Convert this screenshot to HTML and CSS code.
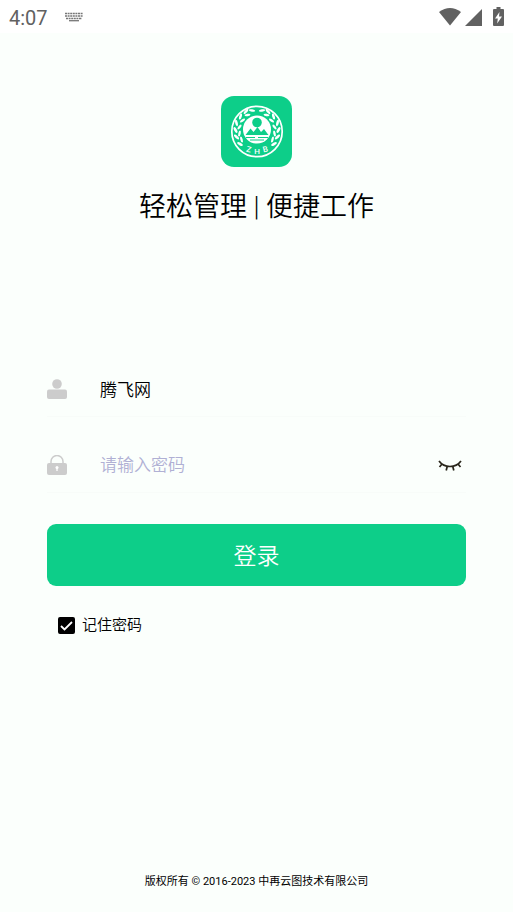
FILE: index.html
```html
<!DOCTYPE html>
<html lang="zh-CN">
<head>
    <meta charset="UTF-8">
    <meta name="viewport" content="width=device-width, initial-scale=1.0">
    <title>登录</title>
    <link rel="stylesheet" href="styles.css">
</head>
<body>
<header class="status-bar">
    <span class="time">4:07</span>
    <svg class="keyboard" width="18" height="10" viewBox="0 0 18 10" aria-hidden="true">
        <path d="M0 1.5h18M0 4h18M1 6.5h16" stroke="#777" stroke-width="1.7" stroke-dasharray="2 .6"/>
        <path d="M4 8.7h10" stroke="#777" stroke-width="1.3"/>
    </svg>
    <div class="status-icons">
        <svg width="22" height="18" viewBox="0 0 22 18" aria-hidden="true"><path d="M0 4Q11-4 22 4L11 17.5Z" fill="#616161"/></svg>
        <svg width="17" height="18" viewBox="0 0 17 18" aria-hidden="true"><path d="M17 1v17H0Z" fill="#616161"/></svg>
        <svg class="battery" width="11" height="19" viewBox="0 0 11 19" aria-hidden="true">
            <path d="M3.5 0h4v2H10q1 0 1 1v15q0 1-1 1H1q-1 0-1-1V3q0-1 1-1h2.5Z" fill="#616161"/>
            <path d="M6.5 5L2 11.5h2.8L4.2 16.5L9 9.5H6Z" fill="#fff"/>
        </svg>
    </div>
</header>

<main class="login">
    <svg class="logo" viewBox="0 0 71 71" role="img" aria-label="ZHB">
        <rect width="71" height="71" rx="13" fill="#0dce89"/>
        <circle cx="36" cy="35.5" r="25.2" fill="none" stroke="#fff" stroke-width="1.7"/>
        <circle cx="36" cy="33.5" r="14" fill="#fff"/>
        <circle cx="36" cy="26.5" r="4.8" fill="#0dce89"/>
        <path d="M24.5 39L29.500 32.5L32.500 36L36.500 31L40 36L43 33L47.5 39Z" fill="#0dce89"/>
        <path d="M25 41.5h9M37 41.5h10M29 44h14" stroke="#0dce89" stroke-width="1.1"/>
        <g id="branch" fill="#fff">
            <ellipse cx="31" cy="14.5" rx="3.2" ry="1.2" transform="rotate(10 31 14.5)"/>
            <ellipse cx="25" cy="15.5" rx="3.2" ry="1.3" transform="rotate(-50 25 15.5)"/>
            <ellipse cx="26.5" cy="19" rx="3" ry="1.2" transform="rotate(-10 26.5 19)"/>
            <ellipse cx="19.5" cy="20.5" rx="3.2" ry="1.3" transform="rotate(-75 19.5 20.5)"/>
            <ellipse cx="21.5" cy="24.5" rx="3" ry="1.2" transform="rotate(-35 21.5 24.5)"/>
            <ellipse cx="15.5" cy="27" rx="3.2" ry="1.3" transform="rotate(78 15.5 27)"/>
            <ellipse cx="18.5" cy="31" rx="3" ry="1.2" transform="rotate(-52 18.5 31)"/>
            <ellipse cx="14.5" cy="34" rx="3.2" ry="1.3" transform="rotate(60 14.5 34)"/>
            <ellipse cx="18.5" cy="37.5" rx="3" ry="1.2" transform="rotate(-78 18.5 37.5)"/>
            <ellipse cx="15.5" cy="41" rx="3.2" ry="1.3" transform="rotate(42 15.5 41)"/>
            <ellipse cx="20.5" cy="43.5" rx="3" ry="1.2" transform="rotate(75 20.5 43.5)"/>
            <ellipse cx="19" cy="48" rx="3.2" ry="1.3" transform="rotate(28 19 48)"/>
        </g>
        <use href="#branch" transform="matrix(-1 0 0 1 72 0)"/>
        <g class="logo-text">
            <text x="27" y="56" transform="rotate(14 27 56)">Z</text>
            <text x="36" y="58">H</text>
            <text x="45" y="56" transform="rotate(-14 45 56)">B</text>
        </g>
    </svg>
    <h1>轻松管理 | 便捷工作</h1>

    <form class="login-form">
        <div class="field">
            <label for="username" aria-label="用户名">
                <svg width="20" height="20" viewBox="0 0 20 20" aria-hidden="true">
                    <circle cx="10" cy="5" r="4.8" fill="#ccc"/>
                    <rect y="10.5" width="20" height="9.5" rx="2" fill="#ccc"/>
                </svg>
            </label>
            <input id="username" type="text" value="腾飞网">
        </div>
        <div class="field">
            <label for="password" aria-label="密码">
                <svg width="20" height="20" viewBox="0 0 20 20" aria-hidden="true">
                    <path d="M4 9V6.5a6 6 0 0 1 12 0V9" fill="none" stroke="#ccc" stroke-width="1.5"/>
                    <rect y="8" width="20" height="12" rx="2" fill="#ccc"/>
                    <circle cx="10" cy="12.5" r="1.5" fill="#fff"/>
                    <path d="M10 12v4" stroke="#fff" stroke-width="1.3"/>
                </svg>
            </label>
            <input id="password" type="password" placeholder="请输入密码">
            <button class="toggle" type="button" aria-label="显示密码">
                <svg width="24" height="14" viewBox="0 0 24 14" aria-hidden="true">
                    <path d="M1 3Q5 8.500 12 8.500T23 3M4 6L1.500 9M20 6L22.500 9M9.200 8.500L8.200 12.500M14.800 8.500L15.800 12.500" fill="none" stroke="#29251a" stroke-width="1.7"/>
                </svg>
            </button>
        </div>
        <button class="submit" type="submit">登录</button>
        <label class="remember">
            <input type="checkbox" checked>
            <span>记住密码</span>
        </label>
    </form>
</main>

<footer>版权所有 © 2016-2023 中再云图技术有限公司</footer>

<script>
    const password = document.getElementById("password");

    // 切换密码显示
    document.querySelector(".toggle").addEventListener("click", function() {
        password.type = password.type === "password" ? "text" : "password";
    });

    document.querySelector(".login-form").addEventListener("submit", function(e) {
        e.preventDefault();
    });
</script>
</body>
</html>
```

FILE: styles.css
```css
* { box-sizing: border-box; }
body { margin: 0; min-height: 100vh; display: flex; flex-direction: column; background: #fbfffc; color: #000; font-family: Roboto, "Noto Sans CJK SC", sans-serif; }
svg { display: block; }
input, button { font: inherit; }

/* 状态栏 */
.status-bar { display: flex; align-items: center; height: 33px; padding: 0 9px; background: #fff; }
.time { color: #616161; font-size: 20px; line-height: 24px; padding-top: 2px; }
.keyboard { margin-left: 17px; }
.status-icons { display: flex; align-items: center; gap: 4px; margin-left: auto; }
.battery { margin-left: 7px; }

/* 登录 */
.login { flex: 1; padding: 63px 47px 0; }
.logo { width: 71px; margin: 0 auto; }
.logo-text { fill: #fff; font-size: 8px; font-weight: 500; text-anchor: middle; }
h1 { margin: 20px 0 0; font-size: 27px; line-height: 40px; font-weight: 350; text-align: center; }
.login-form { margin-top: 114px; font-weight: 350; }
.field { display: flex; align-items: center; height: 76px; padding-top: 20px; border-bottom: 1px solid #f8fcf9; }
.field input { flex: 1; min-width: 0; height: 40px; margin-left: 33px; padding: 0; border: 0; outline: 0; background: none; color: #000; font-size: 17px; }
.field input::placeholder { color: #b0b0d4; opacity: 1; }
.toggle { padding: 4px; border: 0; background: none; cursor: pointer; }
.submit { display: block; width: 100%; height: 62px; margin-top: 31px; padding: 0 0 2px; border: 0; border-radius: 9px; background: #0dce89; color: #fff; font-size: 23px; cursor: pointer; }
.remember { display: flex; align-items: center; width: max-content; gap: 7px; margin: 28px 0 0 11px; font-size: 15px; line-height: 22px; }
.remember input { width: 17px; height: 17px; margin: 0; border: 2px solid #000; border-radius: 2px; appearance: none; }
.remember input:checked { background: #000 url("data:image/svg+xml,%3Csvg xmlns='http://www.w3.org/2000/svg' viewBox='0 0 13 13'%3E%3Cpath d='M1 7l3.5 3.5L12 3' fill='none' stroke='white' stroke-width='1.8'/%3E%3C/svg%3E") center / 13px no-repeat; }
footer { padding: 0 16px 21px; font-size: 11px; line-height: 18px; text-align: center; }
```
